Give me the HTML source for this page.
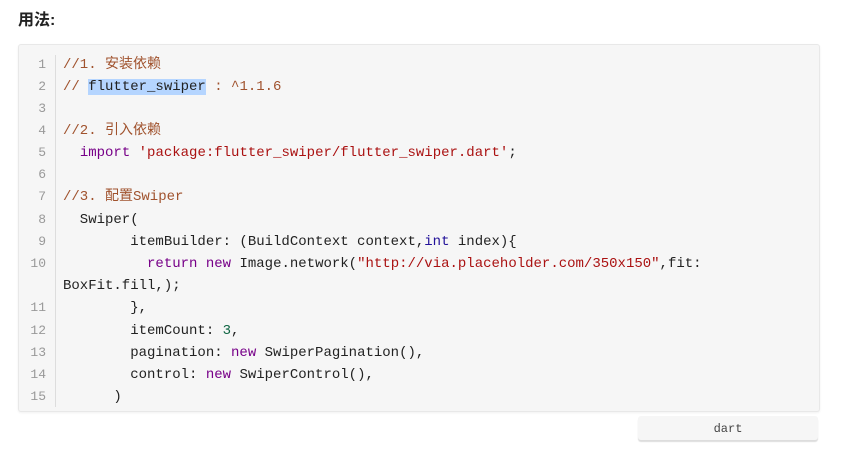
<!DOCTYPE html>
<html><head><meta charset="utf-8"><style>
html,body{margin:0;padding:0;background:#fff;width:863px;height:457px;overflow:hidden}
.t{position:absolute;left:18px;top:6px;font:bold 16px "Liberation Sans","Noto Sans CJK SC",sans-serif;color:#222}
.box{position:absolute;left:18px;top:44px;width:800px;height:366px;background:#f6f6f6;border:1px solid #e8e8e8;border-radius:3px;box-shadow:0 1px 2px rgba(0,0,0,.06)}
.gut{position:absolute;left:36px;top:10px;width:1px;height:352px;background:#ddd}
.r{position:absolute;left:0;height:22px;line-height:22px}
.ln{position:absolute;left:0;width:27px;text-align:right;font:13px "Liberation Mono",monospace;color:#999;line-height:22px}
.cl{position:absolute;left:44px;font:14px "Liberation Mono","Noto Sans CJK SC",monospace;color:#222;white-space:pre;line-height:22px}
.c{color:#a0522d}.k{color:#770088}.s{color:#aa1111}.n{color:#116644}.v{color:#221199}
.sel{background:#b5d5ff}
.btn{position:absolute;left:638px;top:416px;width:180px;height:24px;background:#f6f6f6;border-radius:3px;box-shadow:0 2px 1px #ddd;font:12px "Liberation Mono",monospace;color:#444;text-align:center;line-height:26px}
</style></head><body>
<div class="t">用法:</div>
<div class="box">
<div class="gut"></div>
<div class="ln" style="top:9px">1</div><div class="cl c" style="top:9px">//1. 安装依赖</div>
<div class="ln" style="top:31px">2</div><div class="cl c" style="top:31px">// <span class="sel" style="color:#222">flutter_swiper</span> : ^1.1.6</div>
<div class="ln" style="top:53px">3</div>
<div class="ln" style="top:75px">4</div><div class="cl c" style="top:75px">//2. 引入依赖</div>
<div class="ln" style="top:97px">5</div><div class="cl" style="top:97px">  <span class="k">import</span> <span class="s">'package:flutter_swiper/flutter_swiper.dart'</span>;</div>
<div class="ln" style="top:119px">6</div>
<div class="ln" style="top:141px">7</div><div class="cl c" style="top:141px">//3. 配置Swiper</div>
<div class="ln" style="top:164px">8</div><div class="cl" style="top:164px">  Swiper(</div>
<div class="ln" style="top:186px">9</div><div class="cl" style="top:186px">        itemBuilder: (BuildContext context,<span class="v">int</span> index){</div>
<div class="ln" style="top:208px">10</div><div class="cl" style="top:208px">          <span class="k">return</span> <span class="k">new</span> Image.network(<span class="s">"http://via.placeholder.com/350x150"</span>,fit:</div>
<div class="cl" style="top:230px">BoxFit.fill,);</div>
<div class="ln" style="top:252px">11</div><div class="cl" style="top:252px">        },</div>
<div class="ln" style="top:275px">12</div><div class="cl" style="top:275px">        itemCount: <span class="n">3</span>,</div>
<div class="ln" style="top:297px">13</div><div class="cl" style="top:297px">        pagination: <span class="k">new</span> SwiperPagination(),</div>
<div class="ln" style="top:319px">14</div><div class="cl" style="top:319px">        control: <span class="k">new</span> SwiperControl(),</div>
<div class="ln" style="top:341px">15</div><div class="cl" style="top:341px">      )</div>
</div>
<div class="btn">dart</div>
</body></html>
